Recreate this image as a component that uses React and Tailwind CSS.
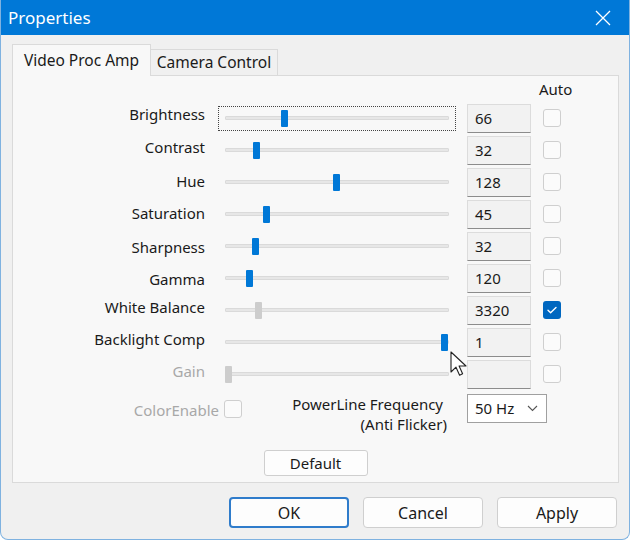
const rows = [
  { label: "Brightness", value: "66", pos: 284, focus: true, shift: "pb-[8px]" },
  { label: "Contrast", value: "32", pos: 256, shift: "pb-[6px]" },
  { label: "Hue", value: "128", pos: 336, shift: "pb-[2px]" },
  { label: "Saturation", value: "45", pos: 266, shift: "pb-[2px]" },
  { label: "Sharpness", value: "32", pos: 255, shift: "pt-[2px]" },
  { label: "Gamma", value: "120", pos: 249, shift: "pt-[2px]" },
  { label: "White Balance", value: "3320", pos: 258, auto: true, shift: "pb-[6px]" },
  { label: "Backlight Comp", value: "1", pos: 444, shift: "pb-[6px]" },
  { label: "Gain", value: "", pos: 228, disabled: true, shift: "pb-[6px]" },
];

function Checkbox({ checked }) {
  if (checked) {
    return (
      <div className="flex h-[18px] w-[18px] items-center justify-center rounded-[3px] bg-[#0067c0]">
        <svg width="12" height="12" viewBox="0 0 12 12" fill="none">
          <path d="M2 6.3l2.6 2.5L10 3.4" stroke="white" strokeWidth="1.4" strokeLinecap="round" strokeLinejoin="round" />
        </svg>
      </div>
    );
  }
  return <div className="h-[18px] w-[18px] rounded-[3px] border border-[#cfcfcf] bg-[#fbfbfb]" />;
}

function Slider({ pos, focus, dim }) {
  // pos = thumb centre in page x; slider box starts at 218
  return (
    <div
      className={
        "relative flex h-[25px] w-[238px] items-center px-[7px] " +
        (focus ? "outline-1 outline-dotted outline-[#444] -outline-offset-1" : "")
      }
    >
      <div className="h-[4px] w-full rounded-[1px] border border-[#dadada] bg-[#e7e7e7]" />
      <div
        className={"absolute top-[4px] h-[17px] w-[7px] rounded-[1px] " + (dim ? "bg-[#cdcdcd]" : "bg-[#0078d7]")}
        style={{ left: pos - 218 - 3 }}
      />
    </div>
  );
}

export default function App() {
  return (
    <div className="relative flex h-[540px] w-[630px] flex-col overflow-hidden rounded-b-[8px] border-x border-b border-[#7fb2e0] bg-[#f0f0f0] font-['Noto_Sans','Open_Sans',sans-serif] text-[#1a1a1a]">
      <div className="flex h-[35px] shrink-0 items-center justify-between bg-[#0078d7] pl-[7px] pr-[18px] text-white">
        <span className="text-[17px]">Properties</span>
        <svg width="16" height="16" viewBox="0 0 16 16" stroke="white" strokeWidth="1.3">
          <path d="M1 1l14 14M15 1L1 15" />
        </svg>
      </div>

      <div className="flex flex-col pl-[11px] pr-[11px]">
        <div className="mt-[9px] flex items-end">
          <div className="relative z-10 -mb-px flex h-[32px] w-[139px] items-center justify-center border border-b-0 border-[#dadada] bg-[#f8f8f8] text-[15.5px]">
            Video Proc Amp
          </div>
          <div className="flex h-[26px] w-[127px] items-center justify-center border border-b-0 border-l-0 border-[#dadada] bg-[#f0f0f0] text-[15.5px]">
            Camera Control
          </div>
        </div>

        <div className="flex h-[408px] w-[607px] flex-col border border-[#dadada] bg-[#f8f8f8]">
          <div className="flex h-[26px] items-center">
            <span className="ml-[526px] text-[15px]">Auto</span>
          </div>

          {rows.map((r) => (
            <div key={r.label} className="flex h-[32px] items-center">
              <div
                className={
                  "w-[192px] text-right text-[15px] " +
                  r.shift +
                  (r.disabled ? " text-[#a8a8a8]" : " text-[#1a1a1a]")
                }
              >
                {r.label}
              </div>
              <div className="ml-[13px]">
                <Slider pos={r.pos} focus={r.focus} dim={r.auto || r.disabled} />
              </div>
              <div className="ml-[11px] flex h-[29px] w-[64px] items-center border border-[#dcdcdc] border-b-[#8c8c8c] bg-[#f2f2f2] pl-[7px] text-[15px]">
                {r.value}
              </div>
              <div className="ml-[12px]">
                <Checkbox checked={r.auto} />
              </div>
            </div>
          ))}

          <div className="mt-[4px] flex items-start">
            <div className="mt-[5px] w-[206px] text-right text-[15px] text-[#a8a8a8]">ColorEnable</div>
            <div className="ml-[5px] mt-[6px]">
              <Checkbox />
            </div>
            <div className="w-[207px] pr-[2px] text-right text-[15px] leading-[20px]">
              <div className="pr-[4px]">PowerLine Frequency</div>
              <div>(Anti Flicker)</div>
            </div>
            <div className="ml-[18px] flex h-[29px] w-[80px] items-center justify-between border border-[#a0a0a0] bg-white pl-[7px] pr-[8px] text-[15px]">
              <span>50 Hz</span>
              <svg width="11" height="7" viewBox="0 0 11 7" fill="none" stroke="#555" strokeWidth="1.1">
                <path d="M1 1l4.5 4.5L10 1" />
              </svg>
            </div>
          </div>

          <div className="mt-[16px] flex justify-center">
            <button className="h-[26px] w-[104px] rounded-[3px] border border-[#cfcfcf] bg-[#fdfdfd] text-[15px]">
              Default
            </button>
          </div>
        </div>

        <div className="mt-[14px] flex justify-end gap-[14px] pr-[1px]">
          <button className="h-[31px] w-[120px] rounded-[4px] border-2 border-[#2f7ccb] bg-[#fdfdfd] text-[16px]">OK</button>
          <button className="h-[31px] w-[120px] rounded-[4px] border border-[#cfcfcf] bg-[#fdfdfd] text-[16px]">Cancel</button>
          <button className="h-[31px] w-[120px] rounded-[4px] border border-[#cfcfcf] bg-[#fdfdfd] text-[16px]">Apply</button>
        </div>
      </div>

      <svg className="absolute left-[449px] top-[351px]" width="18" height="26" viewBox="0 0 18 26">
        <path d="M1 1v20l5-4.8 3.6 8 3-1.4-3.5-7.8H16z" fill="white" stroke="#222" strokeWidth="1.1" strokeLinejoin="round" />
      </svg>
    </div>
  );
}
